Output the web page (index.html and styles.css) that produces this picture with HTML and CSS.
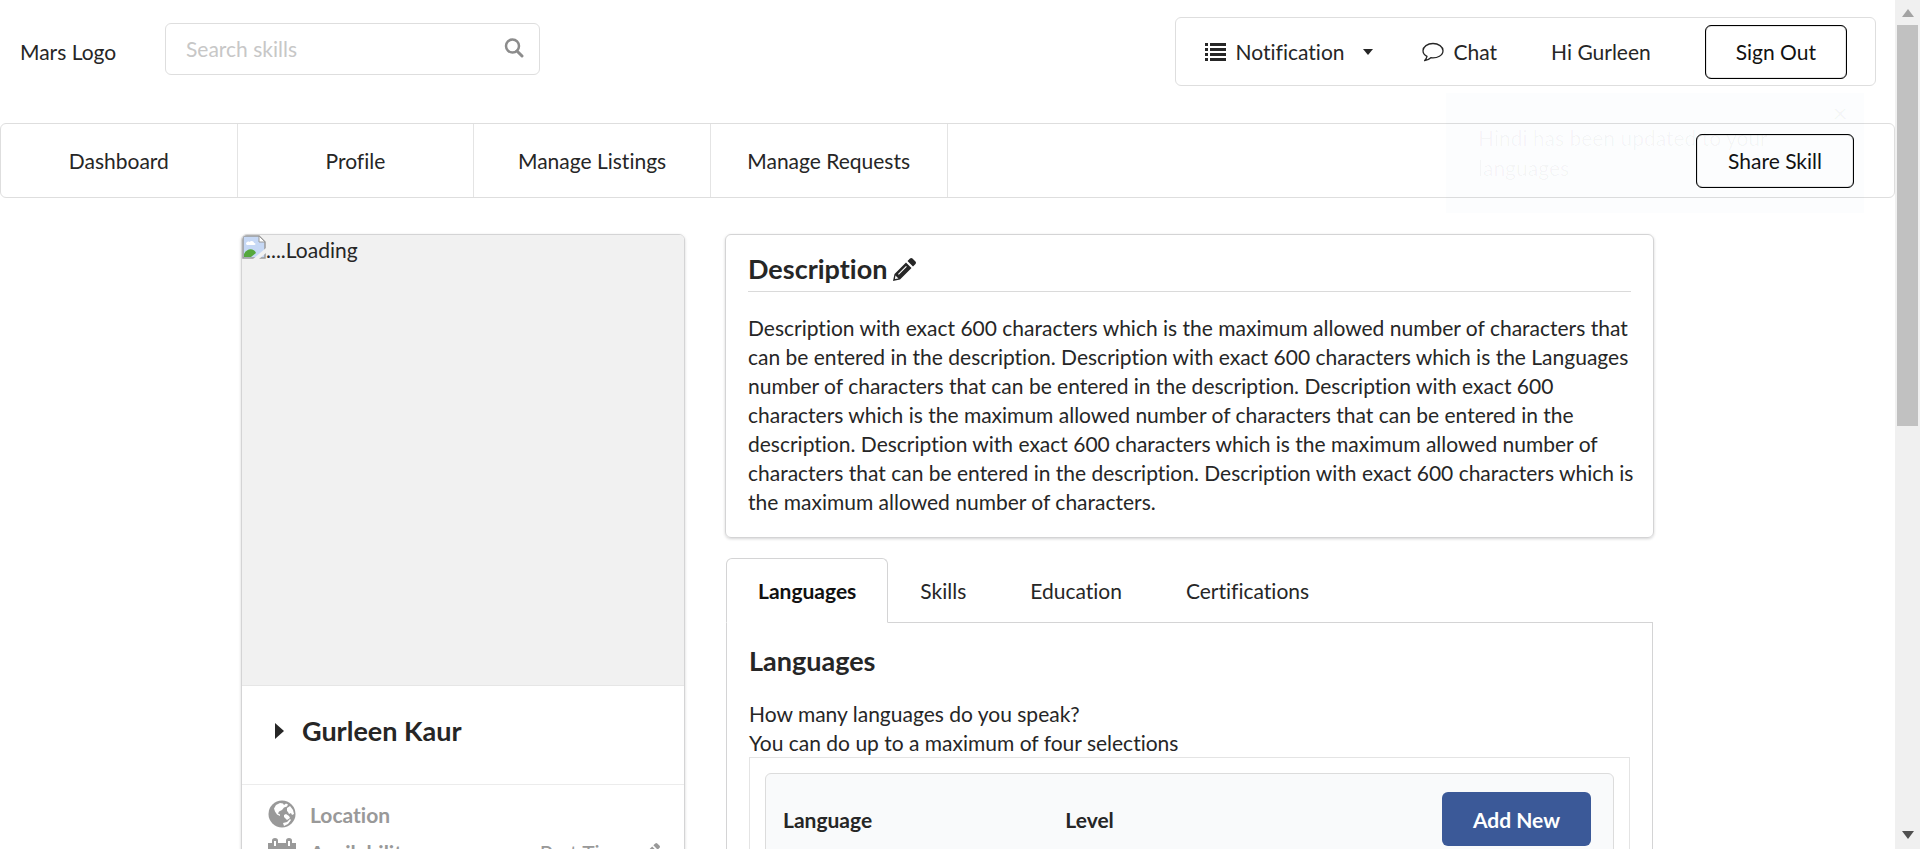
FILE: index.html
```html
<!DOCTYPE html>
<html lang="en">
<head>
<meta charset="utf-8">
<title>Profile</title>
<link rel="stylesheet" href="styles.css">
</head>
<body>
<div class="page">
  <header class="topbar">
    <span class="logo">Mars Logo</span>
    <div class="search">
      <input class="search-input" type="text" placeholder="Search skills" aria-label="Search skills">
      <button class="icon-button" type="button" aria-label="Search"><svg class="search-icon" viewBox="0 0 20 20"><circle cx="8.500" cy="8" r="6.500" fill="none" stroke="currentColor" stroke-width="2.500"/><path d="M13 13l5 5" stroke="currentColor" stroke-width="3" stroke-linecap="round"/></svg></button>
    </div>
    <div class="account">
      <button class="account-item notification" type="button">
        <svg class="list-icon" viewBox="0 0 21 18"><path fill="currentColor" d="M0 0h3v3H0zM5 0h16v3H5zM0 5h3v3H0zM5 5h16v3H5zM0 10h3v3H0zM5 10h16v3H5zM0 15h3v3H0zM5 15h16v3H5z"/></svg>
        <span>Notification</span>
        <svg class="caret-down" viewBox="0 0 10 6"><path fill="currentColor" d="M0 0h10L5 6z"/></svg>
      </button>
      <a class="account-item" href="#"><svg class="chat-icon" viewBox="0 0 22 20"><path fill="none" stroke="currentColor" stroke-width="1.300" stroke-linejoin="round" d="M11 1.500C5.500 1.500 1 4.700 1 8.700c0 2.300 1.500 4.400 4 5.600-.3 1.500-1 2.900-2.400 4.400 2.600-.4 4.700-1.500 6.200-3C15.500 16.500 21 13.300 21 8.700 21 4.700 16.500 1.500 11 1.500z"/></svg><span>Chat</span></a>
      <span class="account-item">Hi Gurleen</span>
      <button class="button outline" type="button">Sign Out</button>
    </div>
  </header>

  <nav class="mainnav">
    <a class="nav-item" href="#">Dashboard</a>
    <a class="nav-item" href="#">Profile</a>
    <a class="nav-item" href="#">Manage Listings</a>
    <a class="nav-item" href="#">Manage Requests</a>
    <button class="button outline share" type="button">Share Skill</button>
  </nav>

  <main class="content">
    <aside class="card">
      <div class="photo"><svg class="broken" viewBox="0 0 24 24"><path fill="#c6d8f5" stroke="#9a9a9a" stroke-width="1.500" d="M1 1h16l6 6v16H1z"/><path fill="#fff" d="M4 9c0-2 2-3 3.500-2C9 5 12 6 12 8c2 0 2 2 0 2H5z"/><path fill="#55a83c" d="M2 22v-3c3-6 10-6 12-1l-5 4z"/><path fill="#fff" stroke="#9a9a9a" d="M17 1v6h6z"/><path fill="#f1f1f1" d="M11 24L24 13v5l-7 6z"/></svg><span>....Loading</span></div>
      <div class="owner"><svg class="caret-right" viewBox="0 0 9 16"><path fill="currentColor" d="M0 0l9 8-9 8z"/></svg><h2 class="title">Gurleen Kaur</h2></div>
      <div class="details">
        <div class="detail">
          <svg class="detail-icon" viewBox="0 0 28 28"><circle cx="14" cy="14" r="13.500" fill="currentColor"/><path fill="#fff" d="M8 5l4-2 3 .5 1 1.500 2-1.500 2 1-1 2-3 1-2 2.500-3 1.500-1 2 2 1v1.500l-3-1.500-2-3-1-3zM19 8l3-2 3 4 1 4-2 1-1-2-2 1-1-2-1-1zM16 15l2-1 3 2 1 2-3 2-1-1-2-2zM15 23l4-1 3-3 1 1-3 4-4 2z"/></svg>
          <strong>Location</strong>
        </div>
        <div class="detail">
          <svg class="detail-icon" viewBox="0 0 28 28"><path fill="currentColor" fill-rule="evenodd" d="M0 5h4V2.500q0-2.500 3-2.500t3 2.500V5h8V2.500q0-2.500 3-2.500t3 2.500V5h4v23H0zM6 3v5h2V3zM20 3v5h2V3zM2 11v15h24V11z"/></svg>
          <strong>Availability</strong>
          <span class="detail-value">Part Time</span>
          <button class="icon-button" type="button" aria-label="Edit availability"><svg class="edit-icon" viewBox="0 0 23 23"><path fill="currentColor" fill-rule="evenodd" d="M0 23l1.500-7L13 4.500l5.500 5.500L7 21.500zM2.500 17.500l-.6 3.600 3.600-.6zM5 16l8-8 .8.8-8 8zM14.500 3L17 .5q1.200-1 2.500 0l3 3q1 1.300 0 2.500L20 8.500z"/></svg></button>
        </div>
      </div>
    </aside>

    <div class="column">
      <section class="description">
        <div class="description-head"><h2 class="title">Description</h2><button class="icon-button" type="button" aria-label="Edit description"><svg class="pencil" viewBox="0 0 23 23"><path fill="currentColor" fill-rule="evenodd" d="M0 23l1.500-7L13 4.500l5.500 5.500L7 21.500zM2.500 17.500l-.6 3.600 3.600-.6zM5 16l8-8 .8.8-8 8zM14.500 3L17 .5q1.200-1 2.500 0l3 3q1 1.300 0 2.500L20 8.500z"/></svg></button></div>
        <p class="description-text">Description with exact 600 characters which is the maximum allowed number of characters that can be entered in the description. Description with exact 600 characters which is the Languages number of characters that can be entered in the description. Description with exact 600 characters which is the maximum allowed number of characters that can be entered in the description. Description with exact 600 characters which is the maximum allowed number of characters that can be entered in the description. Description with exact 600 characters which is the maximum allowed number of characters.</p>
      </section>

      <section class="tabs">
        <div class="tablist">
          <a class="tab active" href="#">Languages</a>
          <a class="tab" href="#">Skills</a>
          <a class="tab" href="#">Education</a>
          <a class="tab" href="#">Certifications</a>
        </div>
        <div class="panel">
          <h2 class="title">Languages</h2>
          <p class="hint">How many languages do you speak?<br>You can do up to a maximum of four selections</p>
          <div class="table-frame">
            <table class="table">
              <thead>
                <tr><th class="col-language">Language</th><th class="col-level">Level</th><th class="col-action"><button class="button primary" type="button">Add New</button></th></tr>
              </thead>
            </table>
          </div>
        </div>
      </section>
    </div>
  </main>

  <div class="toast" role="status">
    <p class="toast-text">Hindi has been updated to your languages</p>
    <button class="toast-close" type="button" aria-label="Close">×</button>
  </div>
</div>
<div class="scrollbar" aria-hidden="true">
  <svg class="scroll-arrow" viewBox="0 0 12 8"><path fill="#a3a3a3" d="M0 8h12L6 0z"/></svg>
  <div class="scroll-thumb"></div>
  <svg class="scroll-arrow" viewBox="0 0 12 8"><path fill="#505050" d="M0 0h12L6 8z"/></svg>
</div>
</body>
</html>
```
FILE: styles.css
```css
* { box-sizing: border-box; }

body {
  margin: 0;
  display: flex;
  height: 100vh;
  overflow: hidden;
  background: #fff;
  color: #262626;
  font-family: Lato, "Liberation Sans", sans-serif;
  font-size: 21px;
  font-variant-ligatures: none;
  line-height: 29px;
}

a { color: inherit; text-decoration: none; }
button { font: inherit; font-variant-ligatures: none; color: inherit; cursor: pointer; }
svg { display: block; flex: none; }
h2, p { margin: 0; }

.page { position: relative; flex: 1; min-width: 0; overflow: hidden; }

.title { font-size: 27px; line-height: 34px; font-weight: 700; }

.icon-button { padding: 0; border: 0; background: none; }

.button {
  height: 54px;
  padding: 0 31px;
  border-radius: 6px;
  white-space: nowrap;
}
.outline { border: 1px solid #000; background: #fff; color: #111; box-shadow: inset 0 0 1px #000; }
.primary { border: 0; background: #3b5998; color: #fff; font-weight: 700; }

.topbar { display: flex; align-items: flex-start; padding: 17px 19px 0 20px; }
.logo { flex: none; width: 145px; padding-top: 20px; }

.search {
  display: flex;
  align-items: center;
  width: 375px;
  height: 52px;
  margin-top: 6px;
  padding: 0 15px 2px 20px;
  border: 1px solid #dedede;
  border-radius: 6px;
  color: #8c8c8c;
}
.search-input {
  flex: 1;
  min-width: 0;
  padding: 0;
  border: 0;
  outline: 0;
  font: inherit;
  background: none;
}
.search-input::placeholder { color: #c7c7c7; }
.search-icon { width: 20px; height: 20px; }

.account {
  display: flex;
  align-items: center;
  height: 69px;
  margin-left: auto;
  padding: 0 28px 0 29px;
  border: 1px solid #dedede;
  border-radius: 6px;
}
.account .button { padding: 0 30px; }
.account-item { display: flex; align-items: center; gap: 10px; margin-right: 54px; }
.notification { margin-right: 49px; padding: 0; border: 0; background: none; }
.list-icon { width: 21px; height: 18px; }
.caret-down { width: 10px; height: 6px; margin-left: 8px; }
.chat-icon { width: 22px; height: 20px; }

.mainnav {
  display: flex;
  align-items: center;
  height: 75px;
  margin-top: 37px;
  border: 1px solid #dedede;
  border-radius: 6px;
}
.nav-item {
  display: flex;
  align-items: center;
  justify-content: center;
  align-self: stretch;
  width: 12.5%;
  min-width: 180px;
  border-right: 1px solid #e4e4e4;
}
.share { margin: 0 40px 0 auto; }

.content {
  display: grid;
  grid-template-columns: 444fr 929fr;
  gap: 40px;
  width: 75%;
  min-width: 1000px;
  max-width: 1413px;
  margin: 36px auto 0;
}

.card {
  align-self: start;
  border: 1px solid #d4d4d5;
  border-radius: 6px;
  box-shadow: 0 1px 3px #d4d4d5;
  overflow: hidden;
}
.photo { display: flex; height: 451px; background: #f1f1f1; border-bottom: 1px solid #e6e6e6; }
.broken { width: 24px; height: 24px; }
.owner { display: flex; align-items: center; gap: 18px; height: 98px; padding: 0 33px 8px; }
.caret-right { width: 9px; height: 16px; }
.details { padding: 10px 24px 24px 26px; border-top: 1px solid #ececec; color: #999; }
.detail { display: flex; align-items: center; gap: 14px; height: 38px; }
.detail-icon { width: 28px; height: 28px; }
.detail-value { margin-left: auto; }
.edit-icon { width: 18px; height: 18px; }

.description {
  padding: 17px 10px 21px 22px;
  border: 1px solid #d4d4d5;
  border-radius: 6px;
  box-shadow: 0 1px 3px #d4d4d5;
}
.description-head {
  display: flex;
  align-items: center;
  gap: 6px;
  margin-right: 12px;
  padding-bottom: 5px;
  border-bottom: 1px solid #dadada;
}
.pencil { width: 23px; height: 23px; }
.description-text { margin-top: 21px; }

.tabs { margin: 20px 1px 0; }
.tablist { display: flex; border-bottom: 1px solid #d4d4d5; }
.tab {
  display: flex;
  align-items: center;
  height: 65px;
  padding: 0 31px;
  margin-bottom: -1px;
  border: 1px solid transparent;
}
.active {
  border-color: #d4d4d5;
  border-bottom-color: #fff;
  border-radius: 6px 6px 0 0;
  background: #fff;
  color: #111;
  font-weight: 700;
}
.panel { padding: 21px 22px; border: 1px solid #d4d4d5; border-top: 0; }
.hint { margin-top: 21px; }
.table-frame { padding: 15px; border: 1px solid #e4e4e4; }
.table {
  width: 100%;
  border: 1px solid #dcdcdc;
  border-radius: 6px;
  border-spacing: 0;
  background: #f9fafb;
  text-align: left;
}
.table th { padding: 18px 17px; }
.table th:last-child { padding-right: 22px; text-align: right; }
.col-language { width: calc(100% / 3); }

.toast {
  position: absolute;
  top: 93px;
  right: 31px;
  width: 418px;
  padding: 30px 60px 30px 32px;
  background: rgba(60, 110, 220, 0.016);
  color: rgba(0, 0, 0, 0.035);
  pointer-events: none;
}
.toast-text { line-height: 30px; }
.toast-close { position: absolute; top: 4px; right: 10px; border: 0; background: none; font-size: 27px; }

.scrollbar {
  display: flex;
  flex-direction: column;
  align-items: center;
  flex: none;
  width: 25px;
  height: 100vh;
  padding: 9px 2px 10px;
  background: #f0f0f0;
}
.scroll-arrow { width: 12px; height: 8px; }
.scroll-thumb { width: 100%; height: 48.3%; margin: 8px 0 auto; background: #c1c1c1; }
```
